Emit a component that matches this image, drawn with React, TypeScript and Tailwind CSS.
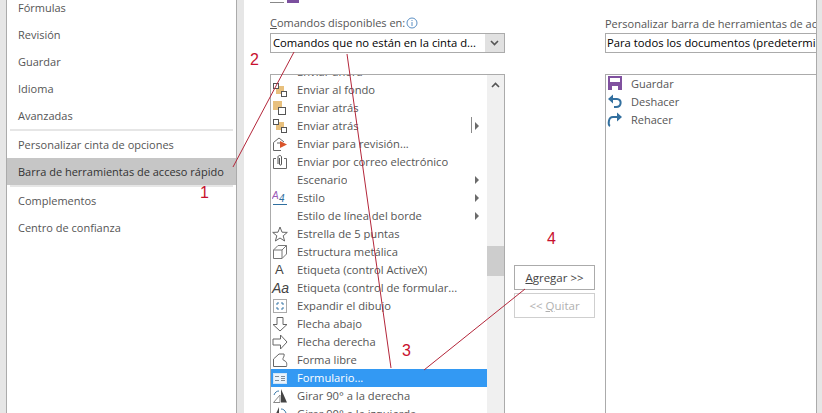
import type { ReactNode } from 'react'

const sideTop = ['Fórmulas', 'Revisión', 'Guardar', 'Idioma', 'Avanzadas']

function Sq({ x, y, s = 5 }: { x: number; y: number; s?: number }) {
  return <rect x={x} y={y} width={s} height={s} fill="#fff" stroke="#555" />
}

const Box = ({ children }: { children: ReactNode }) => (
  <svg width="16" height="16" viewBox="0 0 16 16" fill="none" strokeWidth="1">
    {children}
  </svg>
)

const icons: Record<string, ReactNode> = {
  fondo: (
    <Box>
      <rect x="4" y="4" width="8" height="8" fill="#e8c07d" />
      <Sq x={1.5} y={1.5} />
      <Sq x={9.5} y={9.5} />
    </Box>
  ),
  atras: (
    <Box>
      <rect x="1" y="1" width="9" height="9" fill="#e8c07d" />
      <rect x="6.5" y="7.5" width="7" height="7" fill="#fff" stroke="#555" />
    </Box>
  ),
  revision: (
    <Box>
      <path d="M1.5 6.5 L7 2 L12 6 M1.5 6.5 V14.5 H9 M5 7 H9" stroke="#666" />
      <path d="M8 5 L15 8.5 L8 12 Z" fill="#d9542b" />
    </Box>
  ),
  correo: (
    <Box>
      <path d="M4 4.5 H1.5 V14.5 H14.5 V4.5 H12" stroke="#666" />
      <path d="M6 10 V3 C6 1 9.5 1 9.5 3 V10 C9.5 11.5 7.5 11.5 7.5 10 V4" stroke="#555" />
    </Box>
  ),
  estilo: (
    <Box>
      <text x="0" y="9" fontSize="10" fontStyle="italic" fontFamily="Liberation Sans" fill="#9b59b6">A</text>
      <text x="7" y="12" fontSize="10" fontStyle="italic" fontFamily="Liberation Sans" fill="#2f6f9f">4</text>
      <path d="M1 14.5 H15" stroke="#2f6f9f" />
    </Box>
  ),
  estrella: (
    <Box>
      <path d="M8 1 L10 6.2 L15.3 6.4 L11.2 9.8 L12.6 15 L8 12 L3.4 15 L4.8 9.8 L.7 6.4 L6 6.2 Z" stroke="#666" />
    </Box>
  ),
  metalica: (
    <Box>
      <path d="M1.5 6 L6 1.5 H14.5 V10 L10 14.5 H1.5 Z M1.5 6 H10 V14.5 M10 6 L14.5 1.5" stroke="#777" />
    </Box>
  ),
  etiquetaA: <span className="pl-[3px] font-['Liberation_Sans'] text-[13px] leading-4 text-[#444]">A</span>,
  etiquetaAa: <span className="font-['Liberation_Sans'] text-[14px] italic leading-4 text-[#444]">Aa</span>,
  expandir: (
    <Box>
      <rect x="1.5" y="1.5" width="13" height="13" stroke="#555" strokeDasharray="1 1" />
      <path d="M5 5 H7 M5 5 V7 M11 5 H9 M11 5 V7 M5 11 H7 M5 11 V9 M11 11 H9 M11 11 V9" stroke="#3b78a8" />
    </Box>
  ),
  abajo: (
    <Box>
      <path d="M5 1.5 H11 V8.5 H15 L8 15 L1 8.5 H5 Z" stroke="#666" />
    </Box>
  ),
  derecha: (
    <Box>
      <path d="M1 5 H8.5 V1 L15 8 L8.5 15 V11 H1 Z" stroke="#666" />
    </Box>
  ),
  libre: (
    <Box>
      <path d="M1.5 14.5 V7 L7 2 H12 C13 5 9 7 12 8.5 C15 9.5 15 12 14.5 14.5 Z" stroke="#666" />
    </Box>
  ),
  formulario: (
    <Box>
      <rect x="1.5" y="3.5" width="13" height="10" fill="#e9f3fd" stroke="#cfe4f7" />
      <path d="M3 6.5 H7 M3 10.5 H7 M9 6.5 H13 M9 8.5 H13 M9 10.5 H13" stroke="#7d8a96" />
    </Box>
  ),
  girarDer: (
    <Box>
      <path d="M1.5 14.5 L8 7 V14.5 Z" stroke="#888" />
      <path d="M9 1 L15 14.5 H9 Z" fill="#444" />
      <path d="M2 7 C3 4 5 3 7 3" stroke="#3b78a8" />
    </Box>
  ),
  girarIzq: (
    <Box>
      <path d="M14.5 14.5 L8 7 V14.5 Z" stroke="#888" />
      <path d="M7 1 L1 14.5 H7 Z" fill="#444" />
      <path d="M14 7 C13 4 11 3 9 3" stroke="#3b78a8" />
    </Box>
  ),
}

type Row = { label: string; icon?: string; sub?: boolean; split?: boolean; selected?: boolean }

const rows: Row[] = [
  { label: 'Enviar al fondo', icon: 'fondo' },
  { label: 'Enviar atrás', icon: 'atras' },
  { label: 'Enviar atrás', icon: 'fondo', split: true },
  { label: 'Enviar para revisión...', icon: 'revision' },
  { label: 'Enviar por correo electrónico', icon: 'correo' },
  { label: 'Escenario', sub: true },
  { label: 'Estilo', icon: 'estilo', sub: true },
  { label: 'Estilo de línea del borde', sub: true },
  { label: 'Estrella de 5 puntas', icon: 'estrella' },
  { label: 'Estructura metálica', icon: 'metalica' },
  { label: 'Etiqueta (control ActiveX)', icon: 'etiquetaA' },
  { label: 'Etiqueta (control de formular...', icon: 'etiquetaAa' },
  { label: 'Expandir el dibujo', icon: 'expandir' },
  { label: 'Flecha abajo', icon: 'abajo' },
  { label: 'Flecha derecha', icon: 'derecha' },
  { label: 'Forma libre', icon: 'libre' },
  { label: 'Formulario...', icon: 'formulario', selected: true },
  { label: 'Girar 90° a la derecha', icon: 'girarDer' },
  { label: 'Girar 90° a la izquierda', icon: 'girarIzq' },
]

function Chevron({ up }: { up?: boolean }) {
  return (
    <svg width="9" height="6" viewBox="0 0 9 6" fill="none" stroke="#555" strokeWidth="1.6">
      <path d={up ? 'M1 5 L4.5 1.5 L8 5' : 'M1 1 L4.5 4.5 L8 1'} />
    </svg>
  )
}

function SubArrow() {
  return <span className="absolute right-[8px] top-[5px] h-0 w-0 border-y-[4px] border-l-[4px] border-y-transparent border-l-[#6b6b6b]" />
}

function CommandRow({ row }: { row: Row }) {
  return (
    <div className={`relative flex h-[18px] items-center ${row.selected ? 'bg-[#3399f3] text-white' : 'text-[#555]'}`}>
      <span className="flex w-[26px] shrink-0 justify-start pl-[1px]">{row.icon ? icons[row.icon] : null}</span>
      <span className="truncate">{row.label}</span>
      {row.split && <span className="absolute right-[15px] top-0 h-[16px] w-px bg-[#8a8a8a]" />}
      {(row.sub || row.split) && <SubArrow />}
    </div>
  )
}

export default function App() {
  return (
    <div className="relative flex h-[413px] w-[822px] overflow-hidden bg-[#e6e6e6] font-['Open_Sans',sans-serif] text-[11px] leading-none text-[#555]">
      {/* sidebar */}
      <div className="ml-[6px] h-full w-[231px] shrink-0 overflow-hidden border-x border-[#ababab] bg-white">
        <div className="-mt-[6px]">
          {sideTop.map((s) => (
            <div key={s} className="flex h-[27px] items-center pl-[11px]">{s}</div>
          ))}
          <div className="mx-[3px] h-[2px] bg-[#e6e6e6]" />
          <div className="flex h-[27px] items-center pl-[11px]">Personalizar cinta de opciones</div>
          <div className="flex h-[27px] items-center bg-[#c6c6c6] pl-[11px] text-[#333]">Barra de herramientas de acceso rápido</div>
          <div className="mx-[3px] h-[2px] bg-[#e6e6e6]" />
          <div className="flex h-[27px] items-center pl-[11px]">Complementos</div>
          <div className="flex h-[27px] items-center pl-[11px]">Centro de confianza</div>
        </div>
      </div>

      {/* main panel */}
      <div className="ml-[7px] flex h-full w-[573px] shrink-0 overflow-hidden border-r border-[#ababab] bg-white pl-[26px]">
        <div className="w-[235px] shrink-0">
          <div className="flex h-[3px] items-end overflow-hidden">
            <span className="mr-[3px] block h-px w-[14px] bg-[#888]" />
            <span className="block h-[3px] w-[12px] bg-[#7b4f9e]" />
          </div>
          <div className="flex h-[30px] items-center pt-[9px]">
            <span><span className="underline">C</span>omandos disponibles en:</span>
            <svg className="ml-[1px]" width="12" height="12" viewBox="0 0 12 12" fill="none" stroke="#5b8fc4">
              <circle cx="6" cy="6" r="5" />
              <path d="M6 5 V9 M6 3 V4" />
            </svg>
          </div>
          <div className="flex h-[20px] items-center border border-[#ababab] pl-[2px] text-[11.25px] text-black">
            <span className="flex-1 whitespace-nowrap">Comandos que no están en la cinta d...</span>
            <span className="flex h-full w-[19px] items-center justify-center bg-[#e1e1e1]"><Chevron /></span>
          </div>
          <div className="relative mt-[21px] h-[400px] overflow-hidden border border-[#ababab] pr-[17px] text-[11.2px]">
            <div className="-mt-[12px]">
              <div className="flex h-[18px] items-center pl-[26px]">Enviar ahora</div>
              {rows.map((r, i) => (
                <CommandRow key={i} row={r} />
              ))}
            </div>
            <div className="absolute right-0 top-0 h-full w-[17px] bg-[#f0f0f0]">
              <span className="flex h-[20px] items-center justify-center"><Chevron up /></span>
              <span className="mt-[151px] block h-[30px] bg-[#cdcdcd]" />
            </div>
          </div>
        </div>

        <div className="ml-[9px] w-[81px] shrink-0 pt-[265px] text-[11.5px]">
          <div className="flex h-[25px] items-center justify-center border border-[#ababab] text-[#444]">
            <span><span className="underline">A</span>gregar &gt;&gt;</span>
          </div>
          <div className="mt-[3px] flex h-[25px] items-center justify-center border border-[#cfcfcf] text-[#b0b0b0]">
            <span>&lt;&lt; <span className="underline">Q</span>uitar</span>
          </div>
        </div>

        <div className="ml-[10px] min-w-0 flex-1 overflow-hidden">
          <div className="flex h-[33px] items-center whitespace-nowrap pt-[13px]">Personalizar barra de herramientas de acceso rápido:</div>
          <div className="-mr-[4px] flex h-[20px] items-center whitespace-nowrap border border-[#ababab] pl-[1px] text-[11.25px] text-black">Para todos los documentos (predeterminado)</div>
          <div className="-mr-[4px] mt-[21px] h-[400px] border border-[#ababab]">
            <div className="-mt-[1px]">
              <div className="flex h-[18px] items-center">
                <span className="w-[25px] pl-[1px]">
                  <svg width="16" height="16" viewBox="0 0 16 16">
                    <path d="M1 1 H15 V15 H1 Z" fill="#80519f" />
                    <path d="M3 3 H13 V7 H3 Z M5 11 H11 V15 H5 Z" fill="#fff" />
                  </svg>
                </span>
                Guardar
              </div>
              <div className="flex h-[18px] items-center">
                <span className="w-[25px] pl-[1px]">
                  <svg width="16" height="16" viewBox="0 0 16 16" fill="none">
                    <path d="M1 6 L6 1.5 V10.5 Z" fill="#33709f" />
                    <path d="M5 6 H10 C15 6 15 14 9 14 H7" stroke="#33709f" strokeWidth="2" />
                  </svg>
                </span>
                Deshacer
              </div>
              <div className="flex h-[18px] items-center">
                <span className="w-[25px] pl-[1px]">
                  <svg width="16" height="16" viewBox="0 0 16 16" fill="none">
                    <path d="M15 6 L10 1.5 V10.5 Z" fill="#33709f" />
                    <path d="M11 6 H6 C1 6 1 14 3 15" stroke="#33709f" strokeWidth="2" />
                  </svg>
                </span>
                Rehacer
              </div>
            </div>
          </div>
        </div>
      </div>

      {/* hand-drawn annotations on top of the screenshot */}
      <svg className="pointer-events-none absolute left-0 top-0" width="822" height="413" fill="none" stroke="#b3263a" strokeWidth="1">
        <path d="M233 167 L294 52" />
        <path d="M347 54 L391 368" />
        <path d="M424 370 L525 289" />
      </svg>
      <span className="absolute left-[200px] top-[185px] font-['Liberation_Sans'] text-[16px] text-[#c8102e]">1</span>
      <span className="absolute left-[250px] top-[52px] font-['Liberation_Sans'] text-[16px] text-[#c8102e]">2</span>
      <span className="absolute left-[402px] top-[343px] font-['Liberation_Sans'] text-[16px] text-[#c8102e]">3</span>
      <span className="absolute left-[547px] top-[231px] font-['Liberation_Sans'] text-[16px] text-[#c8102e]">4</span>
    </div>
  )
}
